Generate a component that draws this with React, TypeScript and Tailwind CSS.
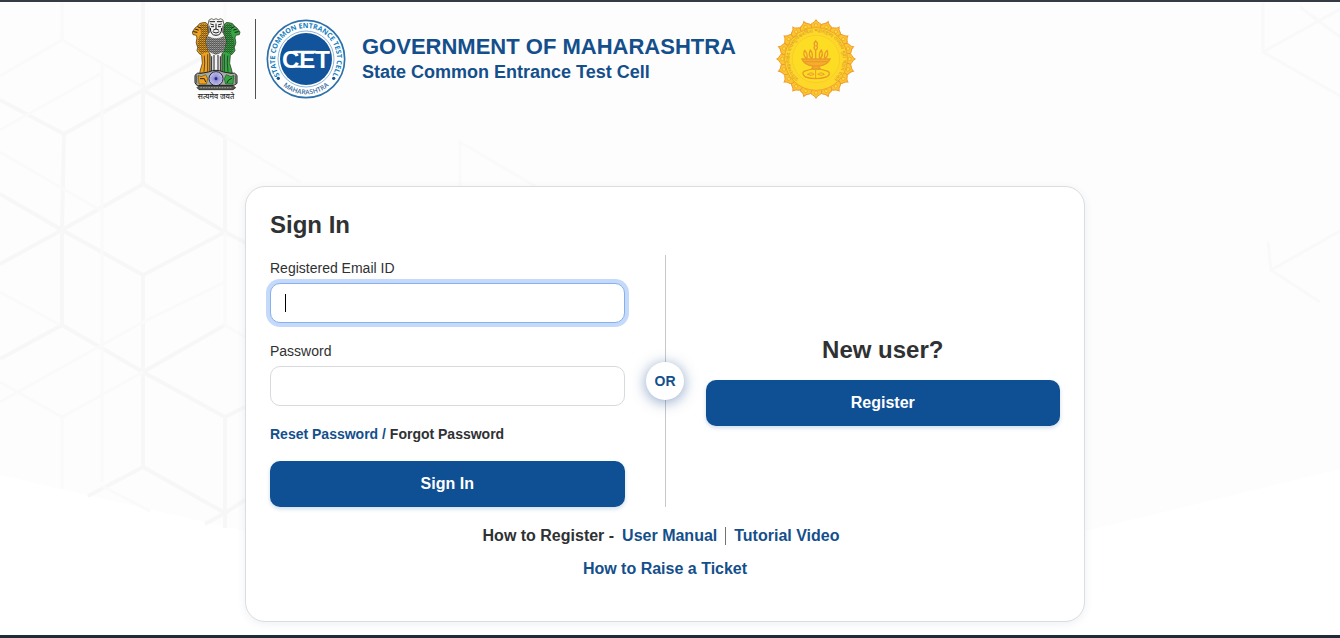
import { useState } from "react";

const petals = Array.from({ length: 20 }, (_, i) => i * 18);
const spokes = Array.from({ length: 12 }, (_, i) => i * 15);

const shades = {
  orange: "#f0a11d",
  white: "#f4f4f4",
  green: "#35a845",
};

function BackgroundPattern() {
  return (
    <svg
      className="pointer-events-none absolute inset-0 h-full w-full"
      viewBox="0 0 1340 638"
      preserveAspectRatio="xMidYMin slice"
      fill="none"
      aria-hidden="true"
    >
      <path d="M0 0H1340V467L1090 528L665 620L240 528L0 473Z" fill="#fdfdfd" />
      <g stroke="#f7f7f7" strokeWidth="4">
        <path d="M0 98L64 132L143 88L225 43M64 132L62 228L0 192M143 0V182L62 228L143 273L225 230L143 182" />
        <path d="M225 230V135L143 88M225 230L250 243M62 228V323L143 370L225 323M62 323L0 357M62 228L0 262" />
        <path d="M143 273V465L88 494M143 370L225 415L245 405M143 465L225 511L245 498M225 415V526M225 511L205 522" />
      </g>
      <g stroke="#fafafa" strokeWidth="3">
        <path d="M62 0V38L143 85M0 74L62 38M102 60V480M225 0V40M225 135L300 180M0 128L100 72M0 150L60 185L100 208" />
        <path d="M0 290L60 323M225 230V323L245 335M143 320L225 280M0 400L143 320M143 370L62 415L0 380M62 415V487M102 484L150 509" />
        <path d="M460 186V140L545 190" />
      </g>
      <g stroke="#f9f9f9" strokeWidth="3">
        <path d="M1263 0V50L1340 7M1263 50L1340 94M1300 5L1340 35M1268 240L1271 268L1340 229M1271 268L1320 300" />
      </g>
    </svg>
  );
}

function StateEmblem() {
  return (
    <svg width="50" height="86" viewBox="30 24 150 258" role="img" aria-label="State Emblem of India">
      <defs>
        <pattern id="mane" width="6" height="6" patternUnits="userSpaceOnUse">
          <path d="M0 3Q2 0 3 3T6 3M1 6L3 4L5 6" fill="none" stroke="#1c1c14" strokeWidth="1.4" />
        </pattern>
      </defs>
      <g stroke="#2b2614" strokeWidth="2">
        <path
          d="M82 52Q76 40 66 44Q54 44 50 54L42 60L34 72L36 80L46 82L48 90Q42 104 50 118L48 128Q54 138 62 142L64 166L58 186L56 196H86V120Z"
          fill={shades.orange}
        />
        <path
          d="M128 52Q134 40 144 44Q156 44 160 54L168 60L177 72L175 80L164 82L162 90Q168 104 160 118L162 128Q156 138 148 142L146 166L152 186L154 196H124V120Z"
          fill={shades.green}
        />
        <path
          d="M84 36L92 32L98 35L105 32L112 35L119 32L126 36L130 56L128 78Q140 96 132 114L128 130L122 140V196H88V140L82 130L78 114Q70 96 82 78L80 56Z"
          fill={shades.white}
        />
      </g>
      <path d="M56 50Q74 42 82 56L78 96L82 132L60 138Q44 120 52 92L60 76Z" fill="url(#mane)" />
      <path d="M154 50Q136 42 128 56L132 96L128 132L150 138Q166 120 158 92L150 76Z" fill="url(#mane)" />
      <path d="M80 84Q104 98 130 84Q138 110 126 132L105 140L84 132Q72 110 80 84Z" fill="#a2a2a2" />
      <path d="M80 84Q104 98 130 84Q138 110 126 132L105 140L84 132Q72 110 80 84Z" fill="url(#mane)" />
      <g fill="none" stroke="#1c1c1c" strokeWidth="3" strokeLinecap="round">
        <path d="M87 41H101M109 41H123M89 48L98 51M121 48L112 51M91 56H98M112 56H119M105 48V62M97 66Q105 59 113 66" />
        <path d="M88 61Q88 82 105 82Q122 82 122 61M96 72Q105 79 114 72M84 54V74M126 54V74" />
        <path d="M92 146V190M99 142V190M111 142V190M118 146V190" strokeWidth="3" />
        <path d="M70 144Q73 164 69 190M80 140V190M140 144Q137 164 141 190M130 140V190" strokeWidth="2" />
        <path d="M38 71L48 73M44 64L52 66M50 56L58 60M172 71L162 73M166 64L158 66M160 56L152 60" />
      </g>
      <path d="M42 202Q48 192 60 196L82 192Q105 182 128 192L150 196Q162 192 168 202V226Q160 234 150 232H60Q46 236 42 224Z" fill="#a7aaa5" stroke="#20221c" strokeWidth="3" />
      <path d="M52 202L60 206L74 200L80 212L76 228H54Z" fill={shades.orange} stroke="#66480d" strokeWidth="2" />
      <path d="M158 202L150 206L136 200L130 212L134 228H156Z" fill={shades.green} stroke="#16541e" strokeWidth="2" />
      <path d="M57 212H70L74 222M153 210L142 217L138 225" fill="none" stroke="#272719" strokeWidth="3" />
      <path d="M47 202V226M163 202V226" fill="none" stroke="#272719" strokeWidth="2" />
      <circle cx="105" cy="212" r="21" fill="#c9c9f0" stroke="#28264b" strokeWidth="3" />
      <g stroke="#514fb0" strokeWidth="1">
        {spokes.map((angle) => (
          <path key={angle} d="M87 212H123" transform={`rotate(${angle} 105 212)`} />
        ))}
      </g>
      <circle cx="105" cy="212" r="4" fill="#262490" />
      <path d="M54 233H156L164 239L156 245H54L48 239Z" fill="#55584f" stroke="#161712" strokeWidth="2" />
      <path d="M58 239H152" stroke="#c4c5bc" strokeWidth="2" strokeDasharray="5 3" />
      <text
        x="105"
        y="272"
        textAnchor="middle"
        className="fill-neutral-800 font-['Noto_Sans_Devanagari','Noto_Sans',sans-serif] text-[22px] font-medium"
      >
        सत्यमेव जयते
      </text>
    </svg>
  );
}

function CetLogo() {
  return (
    <svg width="80" height="80" viewBox="0 0 240 240" role="img" aria-label="State CET Cell">
      <defs>
        <path id="cetTop" d="M60 191A93 93 0 1 1 180 191" />
        <path id="cetBottom" d="M14 120A106 106 0 0 0 226 120" />
      </defs>
      <circle cx="120" cy="120" r="116" fill="#fff" stroke="#2d70aa" strokeWidth="5" />
      <circle cx="120" cy="120" r="84" fill="none" stroke="#5593c5" strokeWidth="2" />
      <circle cx="120" cy="120" r="78" fill="#11549c" />
      <text textAnchor="middle" className="fill-[#147ebd] font-['Open_Sans',sans-serif] text-[21px] font-bold">
        <textPath href="#cetTop" startOffset="50%">
          STATE COMMON ENTRANCE TEST CELL
        </textPath>
      </text>
      <text textAnchor="middle" className="fill-[#3e6d9e] font-['Open_Sans',sans-serif] text-[20px] font-semibold">
        <textPath href="#cetBottom" startOffset="50%">
          MAHARASHTRA
        </textPath>
      </text>
      <circle cx="37" cy="178" r="5" fill="#174f8b" />
      <circle cx="203" cy="178" r="5" fill="#174f8b" />
      <text
        x="120"
        y="146"
        textAnchor="middle"
        className="fill-white font-['Liberation_Sans',sans-serif] text-[72px] font-bold"
      >
        CET
      </text>
      <path d="M82 99H150M82 143H124" stroke="#fff" strokeWidth="7" />
    </svg>
  );
}

function StateSeal() {
  return (
    <svg width="80" height="80" viewBox="0 0 240 240" role="img" aria-label="Seal of Maharashtra">
      <defs>
        <path id="sealRing" d="M120 200A80 80 0 1 1 121 200" />
      </defs>
      <circle cx="120" cy="120" r="106" fill="#f3a935" />
      <g fill="#fcc52f" stroke="#ec9c30" strokeWidth="3">
        {petals.map((angle) => (
          <g key={angle} transform={`rotate(${angle} 120 120)`}>
            <path d="M103 26Q101 15 110 12Q116 10 120 2Q124 10 130 12Q139 15 137 26L129 32H111Z" />
            <circle cx="120" cy="19" r="5" fill="#fddc3c" strokeWidth="2" />
          </g>
        ))}
      </g>
      <circle cx="120" cy="120" r="94" fill="#fdd82a" stroke="#f0a62a" strokeWidth="3" />
      <circle cx="120" cy="120" r="71" fill="#fddc24" stroke="#f8c525" strokeWidth="2" />
      <text
        textAnchor="middle"
        className="fill-[#e3a02a] font-['Noto_Sans_Devanagari','Noto_Sans',sans-serif] text-[15px] font-medium"
      >
        <textPath href="#sealRing" startOffset="50%">
          प्रतिपच्चंद्रलेखेव वर्धिष्णुर्विश्ववंदिता महाराष्ट्रस्य राज्यस्य मुद्रा भद्राय राजते
        </textPath>
      </text>
      <path d="M78 120H162Q155 138 130 141L134 150H105L110 141Q85 138 78 120Z" fill="#f5ad2a" />
      <g fill="none" stroke="#ea9a2a" strokeWidth="4" strokeLinecap="round">
        <path d="M119 66Q111 74 117 80Q111 86 119 94Q128 86 122 80Q128 74 119 66ZM119 94V118" />
        <path d="M86 94Q79 108 92 119Q97 106 86 94M103 93Q95 108 107 119Q113 107 103 93M136 93Q144 108 132 119Q126 107 136 93M153 94Q160 108 147 119Q142 106 153 94" />
        <path d="M78 120H162Q155 138 130 141H110Q85 138 78 120ZM88 128H152M112 142L107 150H133L128 142" />
        <path d="M84 157Q119 142 156 157Q166 166 151 174Q119 184 88 174Q76 164 84 157Z" />
        <path d="M95 166Q106 157 114 166Q106 173 95 166M126 166Q134 157 145 166Q134 173 126 166M119 154V176" strokeWidth="3" />
      </g>
    </svg>
  );
}

function Header() {
  return (
    <header className="mx-auto flex w-full max-w-[1140px] items-center pl-24 pt-[14px]">
      <StateEmblem />
      <div className="ml-[14px] mr-[10px] h-20 w-px shrink-0 bg-neutral-600" />
      <CetLogo />
      <div className="ml-4 font-bold text-[#144f8c]">
        <h1 className="text-[22px] leading-[26px]">GOVERNMENT OF MAHARASHTRA</h1>
        <p className="text-lg leading-6">State Common Entrance Test Cell</p>
      </div>
      <div className="ml-10 shrink-0">
        <StateSeal />
      </div>
    </header>
  );
}

type FieldProps = {
  id: string;
  label: string;
  type: string;
  value: string;
  active: boolean;
  onChange: (value: string) => void;
  onFocus: () => void;
};

function Field({ id, label, type, value, active, onChange, onFocus }: FieldProps) {
  return (
    <div>
      <label htmlFor={id} className="mb-0.5 block text-sm leading-[26px]">
        {label}
      </label>
      <div className="relative">
        <input
          id={id}
          type={type}
          value={value}
          onChange={(e) => onChange(e.target.value)}
          onFocus={onFocus}
          className={
            active
              ? "block h-10 w-full rounded-[10px] border border-[#86b0ee] bg-white px-[14px] text-base outline-none ring-4 ring-[#c5dafa]"
              : "block h-10 w-full rounded-[10px] border border-[#d8dadd] bg-white px-[14px] text-base outline-none"
          }
        />
        {active && value === "" && <span className="absolute left-[15px] top-[11px] h-[18px] w-px bg-black" />}
      </div>
    </div>
  );
}

export default function App() {
  const [email, setEmail] = useState("");
  const [password, setPassword] = useState("");
  const [active, setActive] = useState("email");

  return (
    <div className="relative min-h-screen border-b-[3px] border-t-2 border-b-[#1f2b37] border-t-[#343b42] bg-white pr-[10px] font-['Liberation_Sans',Arial,sans-serif] text-[#2f3133]">
      <BackgroundPattern />

      <div className="relative">
        <Header />

        <main className="mx-auto mt-[84px] max-w-[840px] rounded-[20px] border border-[#dcdde0] bg-white px-6 pb-10 pt-6 shadow-[0_2px_8px_rgba(30,60,110,0.08)]">
          <h2 className="mb-4 text-2xl font-bold leading-7">Sign In</h2>

          <div className="grid grid-cols-[1fr_auto_1fr] gap-10">
            <form onSubmit={(e) => e.preventDefault()}>
              <div className="flex flex-col gap-[15px]">
                <Field
                  id="email"
                  label="Registered Email ID"
                  type="text"
                  value={email}
                  active={active === "email"}
                  onChange={setEmail}
                  onFocus={() => setActive("email")}
                />
                <Field
                  id="password"
                  label="Password"
                  type="password"
                  value={password}
                  active={active === "password"}
                  onChange={setPassword}
                  onFocus={() => setActive("password")}
                />
              </div>
              <p className="mb-[17px] mt-[18px] text-sm font-bold">
                <a href="#reset" className="text-[#144f8c]">Reset Password /</a>{" "}
                <a href="#forgot">Forgot Password</a>
              </p>
              <button
                type="submit"
                className="h-[46px] w-full rounded-[10px] bg-[#0f4f94] font-bold text-white shadow-[0_2px_4px_rgba(15,79,148,0.2)]"
              >
                Sign In
              </button>
            </form>

            <div className="relative w-px bg-[#c6c8ca]">
              <span className="absolute left-1/2 top-1/2 flex size-[38px] -translate-x-1/2 -translate-y-1/2 items-center justify-center rounded-full bg-white text-sm font-bold text-[#144f8c] shadow-[0_2px_14px_rgba(20,70,140,0.5)]">
                OR
              </span>
            </div>

            <div className="flex flex-col justify-center text-center">
              <h2 className="mb-4 text-2xl font-bold leading-7">New user?</h2>
              <button
                type="button"
                className="h-[46px] w-full rounded-[10px] bg-[#0f4f94] font-bold text-white shadow-[0_2px_4px_rgba(15,79,148,0.2)]"
              >
                Register
              </button>
            </div>
          </div>

          <div className="mt-[17px] flex flex-col items-center gap-[9px] font-bold">
            <div className="flex items-center">
              <span>How to Register -</span>
              <a href="#manual" className="px-2 text-[#144f8c]">User Manual</a>
              <span className="h-[18px] w-px bg-neutral-500" />
              <a href="#tutorial" className="px-2 text-[#144f8c]">Tutorial Video</a>
            </div>
            <a href="#ticket" className="text-[#144f8c]">How to Raise a Ticket</a>
          </div>
        </main>
      </div>
    </div>
  );
}
